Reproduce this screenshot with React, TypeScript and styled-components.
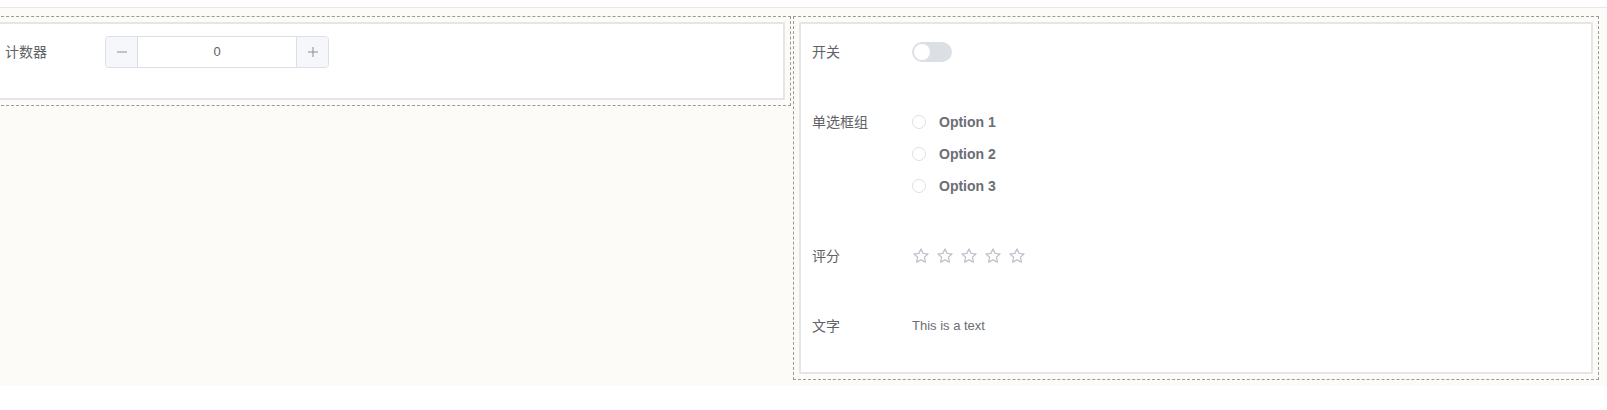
import React, { useState } from 'react'
import styled, { createGlobalStyle } from 'styled-components'

const GlobalStyle = createGlobalStyle`
  html, body {
    margin: 0;
    padding: 0;
    background: #ffffff;
    overflow: hidden;
  }
  body {
    font-family: "Liberation Sans", "Noto Sans CJK SC", sans-serif;
    color: #606266;
  }
`

const Page = styled.div`
  padding-top: 7px;
  width: 1607px;
  overflow: hidden;
`

const Canvas = styled.div`
  border-top: 1px solid #e8e8e4;
  background: #fcfbf8;
  padding: 8px 0 6px;
`

const Grid = styled.div`
  display: grid;
  grid-template-columns: 805px 806px;
  gap: 2px;
  align-items: start;
  margin-left: -14px;
`

const Wrapper = styled.div`
  border: 1px dashed #9a9a9a;
  padding: 5px;
`

const Card = styled.div`
  background: #ffffff;
  border: 2px solid #e6e6e6;
  padding: 4px 12px 0 11px;
`

const Item = styled.div`
  display: flex;
  padding: 8px 0;
  margin-bottom: 22px;
`

const Label = styled.div`
  width: 100px;
  flex: none;
  height: 32px;
  line-height: 32px;
  font-size: 14px;
  color: #606266;
`

const Content = styled.div`
  flex: 1;
  min-height: 32px;
  display: flex;
  flex-direction: column;
  justify-content: center;
`

const Counter = styled.div`
  display: flex;
  width: 224px;
  height: 32px;
  box-sizing: border-box;
  border: 1px solid #dcdfe6;
  border-radius: 4px;
  overflow: hidden;
`

const StepButton = styled.button<{ $side: 'left' | 'right' }>`
  width: 32px;
  flex: none;
  border: none;
  ${({ $side }) => ($side === 'left' ? 'border-right' : 'border-left')}: 1px solid #dcdfe6;
  background: #f5f7fa;
  color: #606266;
  display: flex;
  align-items: center;
  justify-content: center;
  padding: 0;
  cursor: pointer;
`

const CounterValue = styled.div`
  flex: 1;
  text-align: center;
  line-height: 30px;
  font-size: 13px;
  color: #606266;
`

const Switch = styled.button<{ $on: boolean }>`
  position: relative;
  width: 40px;
  height: 20px;
  border: none;
  border-radius: 10px;
  padding: 0;
  background: ${({ $on }) => ($on ? '#409eff' : '#dcdfe6')};
  cursor: pointer;

  &::after {
    content: '';
    position: absolute;
    top: 2px;
    left: ${({ $on }) => ($on ? '22px' : '2px')};
    width: 16px;
    height: 16px;
    border-radius: 50%;
    background: #ffffff;
  }
`

const RadioRow = styled.label`
  display: flex;
  align-items: center;
  height: 32px;
  cursor: pointer;
`

const RadioCircle = styled.span<{ $checked: boolean }>`
  width: 14px;
  height: 14px;
  box-sizing: border-box;
  border-radius: 50%;
  border: 1px solid ${({ $checked }) => ($checked ? '#409eff' : '#dcdfe6')};
  background: #ffffff;
  margin-right: 13px;
`

const RadioText = styled.span`
  font-size: 14px;
  font-weight: 600;
  color: #6b6e74;
`

const Stars = styled.div`
  display: flex;
  gap: 6px;
  height: 32px;
  align-items: center;
`

const StarButton = styled.span`
  width: 18px;
  height: 18px;
  display: flex;
  cursor: pointer;
`

const PlainText = styled.div`
  font-size: 13px;
  line-height: 32px;
  color: #6b6e74;
`

const Star = () => (
  <svg width="18" height="18" viewBox="0 0 24 24" fill="none" stroke="#c0c4cc" strokeWidth="1.8" strokeLinejoin="round">
    <path d="M12 2.6l2.8 5.9 6.5.8-4.8 4.5 1.3 6.4L12 17.1l-5.8 3.1 1.3-6.4-4.8-4.5 6.5-.8z" />
  </svg>
)

export default function App() {
  const [count, setCount] = useState(0)
  const [on, setOn] = useState(false)
  const [choice, setChoice] = useState<number | null>(null)

  return (
    <Page>
      <GlobalStyle />
      <Canvas>
        <Grid>
          <Wrapper>
            <Card>
              <Item>
                <Label>计数器</Label>
                <Content>
                  <Counter>
                    <StepButton $side="left" onClick={() => setCount(count - 1)}>
                      <svg width="12" height="12" viewBox="0 0 12 12">
                        <path d="M1 6h10" stroke="#8a8d93" strokeWidth="1" />
                      </svg>
                    </StepButton>
                    <CounterValue>{count}</CounterValue>
                    <StepButton $side="right" onClick={() => setCount(count + 1)}>
                      <svg width="12" height="12" viewBox="0 0 12 12">
                        <path d="M1 6h10M6 1v10" stroke="#8a8d93" strokeWidth="1" />
                      </svg>
                    </StepButton>
                  </Counter>
                </Content>
              </Item>
            </Card>
          </Wrapper>
          <Wrapper>
            <Card>
              <Item>
                <Label>开关</Label>
                <Content>
                  <Switch $on={on} onClick={() => setOn(!on)} aria-label="开关" />
                </Content>
              </Item>
              <Item>
                <Label>单选框组</Label>
                <Content>
                  {[1, 2, 3].map((n) => (
                    <RadioRow key={n} onClick={() => setChoice(n)}>
                      <RadioCircle $checked={choice === n} />
                      <RadioText>Option {n}</RadioText>
                    </RadioRow>
                  ))}
                </Content>
              </Item>
              <Item>
                <Label>评分</Label>
                <Content>
                  <Stars>
                    {[0, 1, 2, 3, 4].map((i) => (
                      <StarButton key={i}>
                        <Star />
                      </StarButton>
                    ))}
                  </Stars>
                </Content>
              </Item>
              <Item>
                <Label>文字</Label>
                <Content>
                  <PlainText>This is a text</PlainText>
                </Content>
              </Item>
            </Card>
          </Wrapper>
        </Grid>
      </Canvas>
    </Page>
  )
}
